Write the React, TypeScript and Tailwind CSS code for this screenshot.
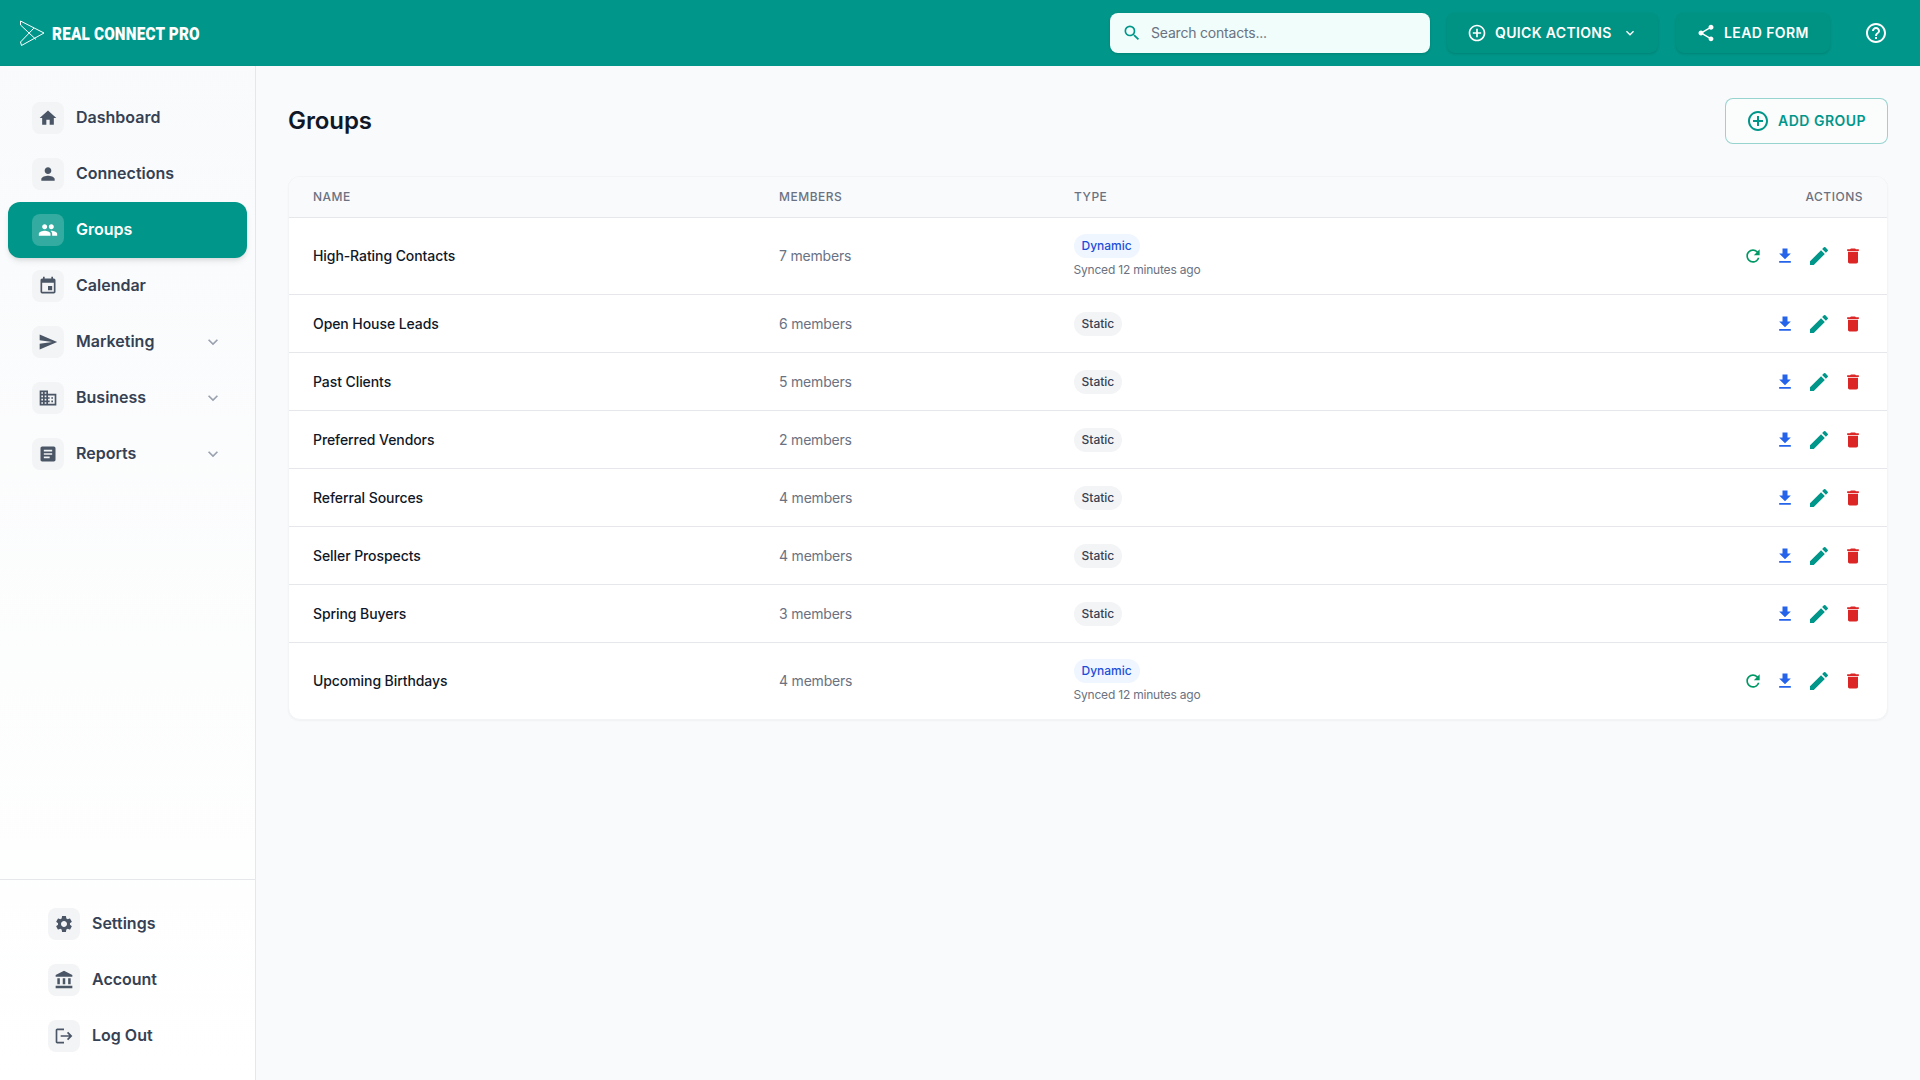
import React from "react";
import {
  MdHome, MdPerson, MdPeople, MdEvent, MdSend, MdBusiness, MdArticle, MdSettings,
  MdAccountBalance, MdLogout, MdSearch, MdAddCircleOutline, MdExpandMore, MdShare,
  MdHelpOutline, MdRefresh, MdFileDownload, MdEdit, MdDelete,
} from "react-icons/md";

const sans = "font-['Inter','Liberation_Sans',sans-serif]";

const nav = [
  { label: "Dashboard", Icon: MdHome },
  { label: "Connections", Icon: MdPerson },
  { label: "Groups", Icon: MdPeople, active: true },
  { label: "Calendar", Icon: MdEvent },
  { label: "Marketing", Icon: MdSend, more: true },
  { label: "Business", Icon: MdBusiness, more: true },
  { label: "Reports", Icon: MdArticle, more: true },
];

const bottom = [
  { label: "Settings", Icon: MdSettings },
  { label: "Account", Icon: MdAccountBalance },
  { label: "Log Out", Icon: MdLogout },
];

const rows = [
  { name: "High-Rating Contacts", members: "7 members", dynamic: true },
  { name: "Open House Leads", members: "6 members" },
  { name: "Past Clients", members: "5 members" },
  { name: "Preferred Vendors", members: "2 members" },
  { name: "Referral Sources", members: "4 members" },
  { name: "Seller Prospects", members: "4 members" },
  { name: "Spring Buyers", members: "3 members" },
  { name: "Upcoming Birthdays", members: "4 members", dynamic: true },
];

function Logo() {
  return (
    <svg width="28" height="28" viewBox="0 0 28 28" fill="none" stroke="#ffffff" strokeWidth="1" strokeLinejoin="round" className="shrink-0">
      <path d="M0.5 2 L24 14 L1.5 26.5 L0.5 23 L14 9" />
      <path d="M0.5 2 L0.5 6 L16 20.5" />
    </svg>
  );
}

function Header() {
  return (
    <header className="h-[66px] shrink-0 bg-teal-600 flex items-center pl-5 pr-8">
      <Logo />
      <span className="ml-[4px] inline-block origin-left scale-x-[0.85] text-white text-[18px] font-black tracking-[0.2px] font-['Roboto',sans-serif] whitespace-nowrap">REAL CONNECT PRO</span>
      <div className="ml-auto flex items-center">
        <div className="w-[320px] h-10 rounded-lg bg-teal-50 flex items-center pl-3 gap-[9px] shadow-sm">
          <MdSearch className="text-teal-600 w-5 h-5" />
          <span className="text-sm text-gray-500 tracking-[-0.2px]">Search contacts...</span>
        </div>
        <button className="ml-[17px] w-[211px] h-10 rounded-lg bg-[#009282] shadow-sm flex items-center pl-5 text-white text-sm font-semibold tracking-wide">
          <MdAddCircleOutline className="w-5 h-5 mr-2" />
          QUICK ACTIONS
          <MdExpandMore className="w-4 h-4 ml-[10px]" />
        </button>
        <button className="ml-[18px] w-[154px] h-10 rounded-lg bg-[#009282] shadow-sm flex items-center pl-5 text-white text-sm font-semibold tracking-[0.4px]">
          <MdShare className="w-5 h-5 mr-2" />
          LEAD FORM
        </button>
        <MdHelpOutline className="ml-[34px] w-6 h-6 text-white" />
      </div>
    </header>
  );
}

function NavItem({ label, Icon, active, more, inset }: { label: string; Icon: React.ComponentType<{ className?: string }>; active?: boolean; more?: boolean; inset?: boolean }) {
  return (
    <a className={`h-14 mx-2 rounded-xl flex items-center gap-3 ${inset ? "px-10" : "px-6"} ${active ? "bg-teal-600 text-white shadow-md" : "text-gray-700"}`}>
      <span className={`w-8 h-8 rounded-lg flex items-center justify-center ${active ? "bg-white/20" : "bg-gray-100 text-gray-600"}`}>
        <Icon className="w-5 h-5" />
      </span>
      <span className="text-base font-semibold pb-[2px]">{label}</span>
      {more && <MdExpandMore className="w-5 h-5 ml-auto text-gray-400" />}
    </a>
  );
}

function Sidebar() {
  return (
    <aside className="w-[256px] shrink-0 border-r border-gray-200 bg-gradient-to-b from-gray-50 to-white shadow-sm flex flex-col">
      <nav className="pt-6 flex-1">
        {nav.map((n) => <NavItem key={n.label} {...n} />)}
      </nav>
      <div className="border-t border-gray-200 pt-4 pb-4">
        {bottom.map((n) => <NavItem key={n.label} {...n} inset />)}
      </div>
    </aside>
  );
}

function GroupRow({ name, members, dynamic, last }: { name: string; members: string; dynamic?: boolean; last: boolean }) {
  const nudge = dynamic ? "" : "pt-px";
  return (
    <tr className={last ? "" : "border-b border-gray-200"}>
      <td className={`px-6 text-sm font-medium tracking-[-0.08px] text-gray-900 ${nudge} ${dynamic ? "h-[77px]" : "h-[58px]"}`}>{name}</td>
      <td className={`px-6 text-sm tracking-[-0.2px] text-gray-500 ${nudge}`}>{members}</td>
      <td className="px-6">
        {dynamic ? (
          <div className="flex flex-col items-start -ml-[0.5px]">
            <span className="h-6 px-2 rounded-xl bg-blue-50 text-[#1d4ed8] text-xs font-medium flex items-center">Dynamic</span>
            <span className="mt-1 text-xs text-gray-500 tracking-[-0.2px]">Synced 12 minutes ago</span>
          </div>
        ) : (
          <span className="inline-flex h-6 px-2 -ml-[0.5px] rounded-xl bg-gray-100 text-gray-700 text-xs font-medium items-center align-middle">Static</span>
        )}
      </td>
      <td className={`px-6 ${nudge}`}>
        <div className="flex items-center justify-end gap-3">
          {dynamic && <MdRefresh className="w-5 h-5 text-emerald-600" />}
          <MdFileDownload className="w-5 h-5 text-[#2563eb]" />
          <MdEdit className="w-6 h-6 text-teal-600" />
          <MdDelete className="w-5 h-5 text-[#dc2626]" />
        </div>
      </td>
    </tr>
  );
}

function Main() {
  return (
    <main className="flex-1 bg-gray-50 px-8 pt-8 min-w-0">
      <div className="flex items-center justify-between mb-8">
        <h1 className="text-2xl font-semibold text-gray-900 tracking-[-0.1px]">Groups</h1>
        <button className="w-[163px] h-[46px] rounded-lg border border-teal-600/40 bg-white/40 flex items-center pl-[20px] text-teal-600 text-sm font-semibold tracking-[0.5px]">
          <MdAddCircleOutline className="w-6 h-6 mr-2" />
          ADD GROUP
        </button>
      </div>
      <div className="rounded-xl border border-gray-100 bg-white shadow-[0_1px_2px_rgba(0,0,0,0.04)] overflow-hidden">
        <table className="w-full table-fixed border-collapse">
          <colgroup>
            <col className="w-[466px]" />
            <col className="w-[295px]" />
            <col />
            <col className="w-[220px]" />
          </colgroup>
          <thead>
            <tr className="h-10 bg-gray-50 border-b border-gray-200 text-left text-xs font-medium text-gray-500">
              <th className="px-6 font-medium tracking-[0.5px]">NAME</th>
              <th className="px-6 font-medium tracking-[0.5px]">MEMBERS</th>
              <th className="px-6 font-medium tracking-[0.5px]">TYPE</th>
              <th className="px-6 font-medium tracking-[0.5px] text-right">ACTIONS</th>
            </tr>
          </thead>
          <tbody>
            {rows.map((r, i) => <GroupRow key={r.name} {...r} last={i === rows.length - 1} />)}
          </tbody>
        </table>
      </div>
    </main>
  );
}

export default function App() {
  return (
    <div className={`h-screen flex flex-col overflow-hidden ${sans}`}>
      <Header />
      <div className="flex flex-1 min-h-0">
        <Sidebar />
        <Main />
      </div>
    </div>
  );
}
